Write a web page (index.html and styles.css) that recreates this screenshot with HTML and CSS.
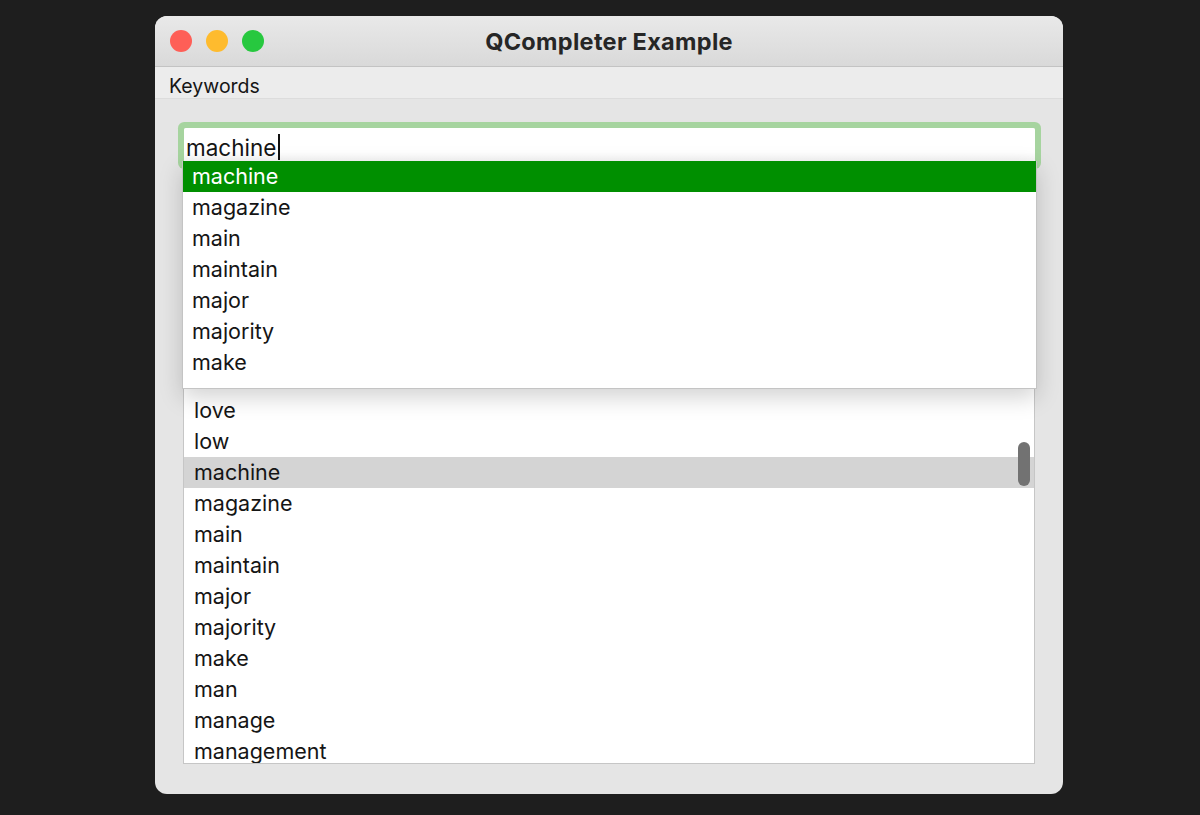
FILE: index.html
```html
<!DOCTYPE html>
<html>

<head>
    <title>QCompleter Example</title>
    <link rel="stylesheet" href="styles.css">
</head>

<body>
    <div class="window">
        <div class="titlebar">
            <div class="lights">
                <span class="light red"></span>
                <span class="light yellow"></span>
                <span class="light green"></span>
            </div>
            <div class="title">QCompleter Example</div>
        </div>

        <div class="menubar">
            <span class="menu-item">Keywords</span>
        </div>

        <div class="central">
            <div class="line-edit">
                <span class="line-text">machine</span><span class="caret"></span>
            </div>

            <!-- rows above "love" sit under the popup, so the list starts lower -->
            <div class="list">
                <div class="row">love</div>
                <div class="row">low</div>
                <div class="row current">machine</div>
                <div class="row">magazine</div>
                <div class="row">main</div>
                <div class="row">maintain</div>
                <div class="row">major</div>
                <div class="row">majority</div>
                <div class="row">make</div>
                <div class="row">man</div>
                <div class="row">manage</div>
                <div class="row">management</div>
                <div class="scroll-thumb"></div>
            </div>

            <div class="popup">
                <div class="pop-row selected">machine</div>
                <div class="pop-row">magazine</div>
                <div class="pop-row">main</div>
                <div class="pop-row">maintain</div>
                <div class="pop-row">major</div>
                <div class="pop-row">majority</div>
                <div class="pop-row">make</div>
            </div>
        </div>
    </div>
</body>

</html>
```

FILE: styles.css
```css
body {
    margin: 0;
    height: 815px;
    background-color: #1e1e1e;
    font-family: Inter, "Liberation Sans", sans-serif;
    color: #151515;
    overflow: hidden;
}

.window {
    margin: 16px 0 0 155px;
    width: 908px;
    height: 778px;
    border-radius: 12px;
    background-color: #e5e5e5;
    display: flex;
    flex-direction: column;
    overflow: hidden;
}

.titlebar {
    position: relative;
    height: 50px;
    flex-shrink: 0;
    display: flex;
    align-items: center;
    justify-content: center;
    background: linear-gradient(#e9e9e9, #d9d9d9);
    border-bottom: 1px solid #c3c3c3;
}

.lights {
    position: absolute;
    left: 15px;
    top: 14px;
    display: flex;
    gap: 14px;
}

.light {
    width: 22px;
    height: 22px;
    border-radius: 50%;
}

.red {
    background-color: #fe5f57;
}

.yellow {
    background-color: #febb2e;
}

.green {
    background-color: #27c83f;
}

.title {
    font-size: 23.5px;
    font-weight: 700;
    color: #262626;
    letter-spacing: 0.3px;
}

.menubar {
    height: 32px;
    flex-shrink: 0;
    display: flex;
    align-items: center;
    padding: 7px 0 0 14px;
    box-sizing: border-box;
    background-color: #ececec;
    border-bottom: 1px solid #dcdcdc;
}

.menu-item {
    font-size: 19.5px;
}

.central {
    position: relative;
    flex: 1;
    min-height: 0;
    padding: 29px 28px 30px 28px;
    display: flex;
    flex-direction: column;
}

.line-edit {
    height: 35px;
    box-sizing: border-box;
    flex-shrink: 0;
    margin: 0 0 0 1px;
    background: linear-gradient(#ffffff 70%, #f4f4f4);
    box-shadow: 0 0 0 6px #a6d49f;
    border-radius: 2px;
    display: flex;
    align-items: center;
    padding: 3px 0 0 2px;
    font-size: 22.5px;
}

.caret {
    width: 1.5px;
    height: 26px;
    background-color: #111;
    margin-left: 2px;
}

.list {
    position: relative;
    flex: 1;
    min-height: 0;
    margin-top: 19px;
    border: 1px solid #c6c6c6;
    background-color: #fff;
    overflow: hidden;
    padding-top: 212px;
}

.row {
    height: 31px;
    line-height: 31px;
    padding-left: 10px;
    font-size: 21.5px;
}

.row.current {
    background-color: #d4d4d4;
}

.scroll-thumb {
    position: absolute;
    right: 4px;
    top: 259px;
    width: 12px;
    height: 44px;
    border-radius: 6px;
    background-color: #727272;
}

.popup {
    position: absolute;
    left: 27px;
    top: 62px;
    width: 853px;
    height: 227px;
    background-color: #fff;
    border: 1px solid #c4c4c4;
    border-top: none;
    box-shadow: 0 8px 22px rgba(0, 0, 0, 0.18);
}

.pop-row {
    height: 31px;
    line-height: 31px;
    padding-left: 9px;
    font-size: 21.5px;
}

.pop-row.selected {
    background-color: #008f00;
    color: #fff;
}
```
